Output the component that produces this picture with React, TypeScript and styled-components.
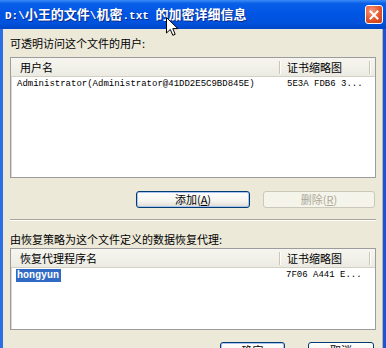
import React from "react";
import styled, { createGlobalStyle, css } from "styled-components";

const cjk = `"Noto Sans CJK SC", "Noto Sans", sans-serif`;
const mono = `"Liberation Mono", "DejaVu Sans Mono", monospace`;

const Global = createGlobalStyle`
  html, body { margin: 0; padding: 0; overflow: hidden; background: #ECE9D8; }
  #root { width: 386px; height: 348px; }
`;

const Window = styled.div`
  position: relative;
  width: 386px;
  height: 348px;
  overflow: hidden;
  display: flex;
  flex-direction: column;
  background: #ece9d8;
  font-family: ${cjk};
`;

const TitleBar = styled.div`
  height: 29px;
  flex: none;
  display: flex;
  align-items: center;
  justify-content: space-between;
  padding: 0 3px 0 5px;
  background: linear-gradient(
    to bottom,
    #3a8cf6 0%,
    #0a5fe8 12%,
    #0055e5 45%,
    #0052dc 80%,
    #0046c8 100%
  );
`;

const TitleText = styled.div`
  color: #fff;
  font-family: ${cjk};
  font-size: 13px;
  font-weight: bold;
  line-height: 16px;
  white-space: pre;
  text-shadow: 1px 1px 0 #0b2a8a;
`;

const TitleMono = styled.span`
  font-family: ${mono};
  font-size: 11px;
  font-weight: bold;
`;

const CloseButton = styled.div`
  width: 18px;
  height: 19px;
  box-sizing: border-box;
  border: 1px solid #fff;
  border-radius: 3px;
  background: radial-gradient(circle at 35% 30%, #f59a7c 0%, #e2552c 55%, #c43a16 100%);
  display: flex;
  align-items: center;
  justify-content: center;
`;

const Client = styled.div`
  flex: 1;
  display: flex;
  flex-direction: column;
  padding: 0 7px;
  border-left: 3px solid #2a6fe6;
  border-right: 3px solid #1a55d8;
  box-shadow: inset -1px 0 0 #b8b5a6;
`;

const Label = styled.div<{ $top: number; $bottom: number }>`
  font-size: 11px;
  line-height: 14px;
  color: #000;
  margin-top: ${(p) => p.$top}px;
  margin-bottom: ${(p) => p.$bottom}px;
  white-space: nowrap;
`;

const ListBox = styled.div<{ $height: number }>`
  height: ${(p) => p.$height}px;
  box-sizing: border-box;
  flex: none;
  background: #fff;
  border: 1px solid #9c9c9c;
  box-shadow: inset 1px 1px 0 #d8d8d8;
  overflow: hidden;
`;

const HeaderRow = styled.div`
  display: grid;
  grid-template-columns: 269px 90px 1fr;
  height: 18px;
  background: linear-gradient(to bottom, #f6f5ef 0%, #ecebe3 100%);
  border-bottom: 1px solid #d4d1c3;
`;

const HeaderCell = styled.div<{ $pad: number; $divider?: boolean }>`
  display: flex;
  align-items: center;
  padding-left: ${(p) => p.$pad}px;
  margin: 3px 0 2px;
  font-size: 11px;
  line-height: 13px;
  color: #000;
  white-space: nowrap;
  ${(p) =>
    p.$divider &&
    css`
      border-right: 1px solid #c9c6b4;
      box-shadow: 1px 0 0 #fff;
    `}
`;

const Row = styled.div`
  display: grid;
  grid-template-columns: 269px 90px 1fr;
  height: 14px;
  align-items: center;
  font-family: ${mono};
  font-size: 9px;
  color: #000;
  white-space: nowrap;
`;

const Cell = styled.div<{ $pad: number }>`
  padding-left: ${(p) => p.$pad}px;
  overflow: hidden;
`;

const Selected = styled.span`
  display: inline-block;
  background: #316ac5;
  color: #fff;
  font-size: 10px;
  font-weight: bold;
  line-height: 13px;
  padding: 0 2px 0 1px;
`;

const ButtonRow = styled.div<{ $top: number; $gap: number; $right: number }>`
  display: flex;
  justify-content: flex-end;
  gap: ${(p) => p.$gap}px;
  margin-top: ${(p) => p.$top}px;
  margin-right: ${(p) => p.$right}px;
  flex: none;
`;

const Button = styled.div<{ $width: number; $variant?: "default" | "disabled" | "normal" }>`
  width: ${(p) => p.$width}px;
  height: 17px;
  box-sizing: border-box;
  border-radius: 3px;
  display: flex;
  align-items: center;
  justify-content: center;
  font-size: 11px;
  line-height: 13px;
  white-space: nowrap;
  border: 1px solid #003c74;
  color: #000;
  background: linear-gradient(to bottom, #ffffff 0%, #f5f4ee 60%, #dedbd0 100%);
  ${(p) =>
    p.$variant === "default" &&
    css`
      box-shadow: inset 0 0 0 1px #a9c4f0;
    `}
  ${(p) =>
    p.$variant === "disabled" &&
    css`
      border-color: #cac8bb;
      color: #aca899;
      background: #f5f4ea;
    `}
`;

const Separator = styled.div`
  margin-top: 11px;
  border-top: 1px solid #aca899;
  border-bottom: 1px solid #fff;
  flex: none;
`;

const Cursor = styled.svg`
  position: absolute;
  left: 166px;
  top: 17px;
`;

const Mn = styled.span`
  text-decoration: underline;
`;

export default function App() {
  return (
    <>
      <Global />
      <Window>
        <TitleBar>
          <TitleText>
            <TitleMono>{"D:\\"}</TitleMono>小王的文件<TitleMono>{"\\"}</TitleMono>机密
            <TitleMono>{".txt "}</TitleMono>的加密详细信息
          </TitleText>
          <CloseButton>
            <svg width="10" height="10" viewBox="0 0 10 10">
              <path d="M1.5 1.5 L8.5 8.5 M8.5 1.5 L1.5 8.5" stroke="#fff" strokeWidth="2" strokeLinecap="square" />
            </svg>
          </CloseButton>
        </TitleBar>
        <Client>
          <Label $top={7} $bottom={7}>可透明访问这个文件的用户:</Label>
          <ListBox $height={121}>
            <HeaderRow>
              <HeaderCell $pad={9} $divider>用户名</HeaderCell>
              <HeaderCell $pad={7} $divider>证书缩略图</HeaderCell>
              <HeaderCell $pad={0} />
            </HeaderRow>
            <Row>
              <Cell $pad={6}>Administrator(Administrator@41DD2E5C9BD845E)</Cell>
              <Cell $pad={7}>5E3A FDB6 3...</Cell>
              <Cell $pad={0} />
            </Row>
          </ListBox>
          <ButtonRow $top={13} $gap={13} $right={1}>
            <Button $width={114} $variant="default">
              添加(<Mn>A</Mn>)
            </Button>
            <Button $width={112} $variant="disabled">
              删除(<Mn>R</Mn>)
            </Button>
          </ButtonRow>
          <Separator />
          <Label $top={11} $bottom={2}>由恢复策略为这个文件定义的数据恢复代理:</Label>
          <ListBox $height={82}>
            <HeaderRow>
              <HeaderCell $pad={9} $divider>恢复代理程序名</HeaderCell>
              <HeaderCell $pad={7} $divider>证书缩略图</HeaderCell>
              <HeaderCell $pad={0} />
            </HeaderRow>
            <Row>
              <Cell $pad={5}>
                <Selected>hongyun</Selected>
              </Cell>
              <Cell $pad={6}>7F06 A441 E...</Cell>
              <Cell $pad={0} />
            </Row>
          </ListBox>
          <ButtonRow $top={12} $gap={23} $right={2}>
            <Button $width={65} $variant="default">确定</Button>
            <Button $width={66}>取消</Button>
          </ButtonRow>
        </Client>
        <Cursor width="13" height="20" viewBox="0 0 13 20">
          <path
            d="M0.5 0.5 L0.5 16 L4.3 12.4 L6.8 18.3 L9.2 17.3 L6.8 11.6 L11.8 11.6 Z"
            fill="#fff"
            stroke="#000"
            strokeWidth="1"
            strokeLinejoin="miter"
          />
        </Cursor>
      </Window>
    </>
  );
}
